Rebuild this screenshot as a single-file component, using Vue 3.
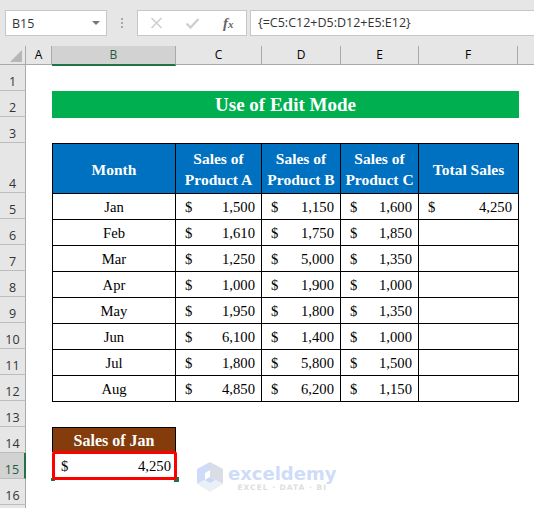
<template>
  <div class="app">
    <!-- formula bar -->
    <div class="formula-row">
      <div class="name-box">
        <span>B15</span>
        <span class="caret"></span>
      </div>
      <div class="dots"><i></i><i></i><i></i></div>
      <div class="fx-box">
        <svg class="fx-icon" width="13" height="14" viewBox="0 0 13 14">
          <path d="M1.5 2 L11.5 12 M11.5 2 L1.5 12" stroke="#cfcfcf" stroke-width="1.6" fill="none" />
        </svg>
        <svg class="fx-icon" width="15" height="14" viewBox="0 0 15 14">
          <path d="M1.5 7.5 L5.5 11.5 L13.5 3" stroke="#cfcfcf" stroke-width="2.4" fill="none" />
        </svg>
        <span class="fx">f<small>x</small></span>
      </div>
      <div class="formula-input">{=C5:C12+D5:D12+E5:E12}</div>
    </div>

    <!-- column letters -->
    <div class="col-heads">
      <div class="corner"><span class="tri"></span></div>
      <div
        v-for="col in columns"
        :key="col.name"
        class="col-head"
        :class="{ active: col.name === 'B' }"
        :style="{ width: col.width + 'px' }"
      >
        {{ col.name }}
      </div>
    </div>

    <div class="body">
      <div class="row-heads">
        <div
          v-for="row in rows"
          :key="row.n"
          class="row-head"
          :class="{ active: row.n === 15 }"
          :style="{ height: row.h + 'px' }"
        >
          {{ row.n }}
        </div>
        <div class="row-head filler"></div>
      </div>

      <div class="sheet">
        <div class="title">Use of Edit Mode</div>

        <div class="table">
          <div class="th">Month</div>
          <div class="th">Sales of<br />Product A</div>
          <div class="th">Sales of<br />Product B</div>
          <div class="th">Sales of<br />Product C</div>
          <div class="th">Total Sales</div>
          <template v-for="r in sales" :key="r.month">
            <div class="td center">{{ r.month }}</div>
            <div class="td money"><span>$</span><span>{{ r.a }}</span></div>
            <div class="td money"><span>$</span><span>{{ r.b }}</span></div>
            <div class="td money"><span>$</span><span>{{ r.c }}</span></div>
            <div class="td money">
              <template v-if="r.total"><span>$</span><span>{{ r.total }}</span></template>
            </div>
          </template>
        </div>

        <div class="jan-head">Sales of Jan</div>
        <div class="jan-value"><span>$</span><span>4,250</span></div>
      </div>

      <!-- watermark -->
      <div class="watermark">
        <svg width="30" height="32" viewBox="0 0 30 32">
          <path d="M15 1 L28 8 L28 23 L15 16 Z" fill="#d9dde6" />
          <path d="M15 1 L2 8 L2 23 L10 19 L10 12 L15 9 Z" fill="#cfdcf8" />
          <path d="M2 23 L15 16 L28 23 L15 31 Z" fill="#eaf0f6" />
          <path d="M10 19 L15 22 L20 19 L15 16 Z" fill="#c9d8f8" />
        </svg>
        <div class="wm-text">
          <div class="wm-name">exceldemy</div>
          <div class="wm-sub">EXCEL · DATA · BI</div>
        </div>
      </div>
    </div>
  </div>
</template>

<script setup>
const columns = [
  { name: "A", width: 26 },
  { name: "B", width: 124 },
  { name: "C", width: 86 },
  { name: "D", width: 79 },
  { name: "E", width: 78 },
  { name: "F", width: 99 },
  { name: "", width: 16 },
];

const rows = [
  { n: 1, h: 26 },
  { n: 2, h: 26 },
  { n: 3, h: 26 },
  { n: 4, h: 50 },
];
for (let n = 5; n <= 16; n++) {
  rows.push({ n, h: 26 });
}

const sales = [
  { month: "Jan", a: "1,500", b: "1,150", c: "1,600", total: "4,250" },
  { month: "Feb", a: "1,610", b: "1,750", c: "1,850" },
  { month: "Mar", a: "1,250", b: "5,000", c: "1,350" },
  { month: "Apr", a: "1,000", b: "1,900", c: "1,000" },
  { month: "May", a: "1,950", b: "1,800", c: "1,350" },
  { month: "Jun", a: "6,100", b: "1,400", c: "1,000" },
  { month: "Jul", a: "1,800", b: "5,800", c: "1,500" },
  { month: "Aug", a: "4,850", b: "6,200", c: "1,150" },
];
</script>

<style>
html,
body {
  margin: 0;
  background: #fff;
  overflow: hidden;
}
</style>

<style scoped>
.app {
  width: 534px;
  height: 508px;
  overflow: hidden;
  background: #fff;
  font-family: "Liberation Serif", serif;
  color: #000;
}

.formula-row {
  height: 46px;
  box-sizing: border-box;
  padding: 10px 0 0 5px;
  background: #e6e6e6;
  display: flex;
  align-items: flex-start;
  font-family: "Open Sans", sans-serif;
  font-size: 12.5px;
  color: #333;
}
.name-box {
  width: 102px;
  height: 26px;
  box-sizing: border-box;
  background: #fff;
  border: 1px solid #c6c6c6;
  display: flex;
  align-items: center;
  justify-content: space-between;
  padding: 0 6px;
}
.caret {
  width: 0;
  height: 0;
  border-left: 4px solid transparent;
  border-right: 4px solid transparent;
  border-top: 4px solid #777;
}
.dots {
  width: 30px;
  height: 26px;
  display: flex;
  flex-direction: column;
  align-items: center;
  justify-content: center;
  gap: 2px;
}
.dots i {
  width: 2px;
  height: 2px;
  background: #a8a8a8;
}
.fx-box {
  width: 110px;
  height: 26px;
  box-sizing: border-box;
  background: #fff;
  border: 1px solid #c6c6c6;
  display: flex;
  align-items: center;
  gap: 22px;
  padding-left: 12px;
}
.fx {
  margin-left: 1px;
  font-family: "Liberation Serif", serif;
  font-style: italic;
  font-weight: bold;
  font-size: 15px;
  color: #666;
}
.fx small {
  font-size: 11px;
}
.fx-icon {
  flex: none;
}
.formula-input {
  margin-left: 3px;
  flex: 1;
  height: 26px;
  box-sizing: border-box;
  background: #fff;
  border: 1px solid #c6c6c6;
  border-right: 0;
  padding-left: 7px;
  line-height: 24px;
  white-space: nowrap;
}

.col-heads {
  height: 19px;
  box-sizing: border-box;
  background: #e6e6e6;
  border-bottom: 1px solid #a9a9a9;
  display: flex;
  font-family: "Open Sans", sans-serif;
  font-size: 12px;
}
.corner {
  width: 26px;
  box-sizing: border-box;
  border-right: 1px solid #a9a9a9;
  position: relative;
}
.tri {
  position: absolute;
  right: 3px;
  bottom: 2px;
  width: 0;
  height: 0;
  border-left: 12px solid transparent;
  border-bottom: 12px solid #b6b6b6;
}
.col-head {
  box-sizing: border-box;
  height: 18px;
  border-right: 1px solid #a9a9a9;
  text-align: center;
  line-height: 18px;
}
.col-head:last-child {
  border-right: 0;
}
.col-head.active {
  background: #d2d2d2;
  color: #1f5c3f;
  border-bottom: 2px solid #217346;
  height: 20px;
}

.body {
  position: relative;
  display: flex;
}
.row-heads {
  width: 26px;
  flex: none;
  font-family: "Open Sans", sans-serif;
  font-size: 12.5px;
  color: #333;
}
.row-head {
  box-sizing: border-box;
  background: #e6e6e6;
  border-right: 1px solid #a9a9a9;
  border-bottom: 1px solid #bdbdbd;
  display: flex;
  align-items: flex-end;
  justify-content: center;
}
.row-head.active {
  background: #d2d2d2;
  color: #1f5c3f;
  border-right: 2px solid #217346;
}
.filler {
  height: 3px;
  border-bottom: 0;
}

.sheet {
  padding: 26px 0 0 26px;
  display: flex;
  flex-direction: column;
  isolation: isolate;
}
.title {
  width: 467px;
  height: 27px;
  background: #00b050;
  color: #fff;
  font-weight: bold;
  font-size: 19px;
  line-height: 27px;
  text-align: center;
}

.table {
  margin-top: 25px;
  width: 467px;
  box-sizing: border-box;
  display: grid;
  grid-template-columns: 123px 86px 79px 78px 1fr;
  grid-template-rows: 50px repeat(8, 26px);
  border-top: 1px solid #000;
  border-left: 1px solid #000;
}
.th,
.td {
  box-sizing: border-box;
  border-right: 1px solid #000;
  border-bottom: 1px solid #000;
  font-size: 14.67px;
}
.th {
  background: #0070c0;
  color: #fff;
  font-weight: bold;
  font-size: 15.5px;
  line-height: 21px;
  padding-top: 1px;
  display: flex;
  align-items: center;
  justify-content: center;
  text-align: center;
}
.td {
  padding-top: 1px;
  display: flex;
  align-items: center;
}
.center {
  justify-content: center;
}
.money {
  justify-content: space-between;
  padding: 1px 6px 0 9px;
}

.jan-head {
  margin-top: 25px;
  width: 124px;
  height: 25px;
  box-sizing: border-box;
  background: #843c0c;
  border: 1px solid #000;
  border-bottom: 0;
  color: #fff;
  font-weight: bold;
  font-size: 16px;
  line-height: 25px;
  text-align: center;
}
.jan-value {
  position: relative;
  width: 125px;
  height: 29px;
  margin-top: -1px;
  box-sizing: border-box;
  border: 3px solid #f00;
  border-radius: 3px;
  font-size: 14.67px;
  display: flex;
  align-items: center;
  justify-content: space-between;
  padding: 1px 3px 0 6px;
}
/* green fill handle peeking out behind the red box */
.jan-value::before,
.jan-value::after {
  content: "";
  position: absolute;
  z-index: -1;
  background: #217346;
}
.jan-value::before {
  left: -4px;
  bottom: -4px;
  width: 4px;
  height: 3px;
}
.jan-value::after {
  right: -5px;
  bottom: -5px;
  width: 5px;
  height: 5px;
}

.watermark {
  position: absolute;
  left: 195px;
  top: 396px;
  display: flex;
  align-items: center;
  gap: 3px;
}
.wm-text {
  padding-top: 1px;
  font-family: "DejaVu Sans", sans-serif;
}
.wm-name {
  font-size: 18px;
  line-height: 20px;
  font-weight: bold;
  color: #cfdcf8;
}
.wm-sub {
  font-size: 7.5px;
  line-height: 8px;
  font-weight: bold;
  letter-spacing: 1px;
  color: #dedede;
  text-align: center;
}
</style>
